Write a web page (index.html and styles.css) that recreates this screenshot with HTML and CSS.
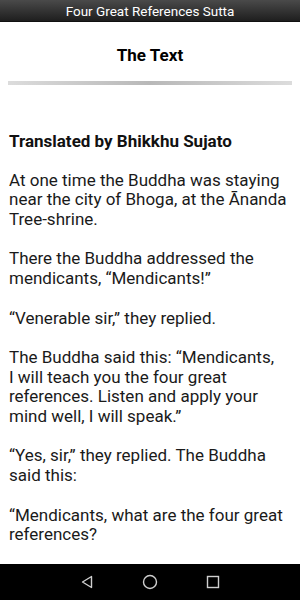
FILE: index.html
```html
<!DOCTYPE html>
<html>
<head>
<meta charset="utf-8">
<link rel="stylesheet" href="styles.css">
</head>
<body>
<div class="screen">
  <header class="appbar">Four Great References Sutta</header>
  <main class="content">
    <h1 class="title">The Text</h1>
    <div class="divider"></div>
    <h2 class="byline">Translated by Bhikkhu Sujato</h2>
    <p>At one time the Buddha was staying near the city of Bhoga, at the Ānanda Tree-shrine.</p>
    <p>There the Buddha addressed the mendicants, “Mendicants!”</p>
    <p>“Venerable sir,” they replied.</p>
    <p>The Buddha said this: “Mendicants,<br>I will teach you the four great<br>references. Listen and apply your mind well, I will speak.”</p>
    <p>“Yes, sir,” they replied. The Buddha said this:</p>
    <p>“Mendicants, what are the four great references?</p>
  </main>
  <nav class="navbar">
    <svg class="nav-icon" width="14" height="14" viewBox="0 0 14 14"><path d="M11.5 1.5 L2.5 7 L11.5 12.5 Z" fill="none" stroke="#cfcfcf" stroke-width="1.4" stroke-linejoin="round"/></svg>
    <svg class="nav-icon" width="16" height="16" viewBox="0 0 16 16"><circle cx="8" cy="8" r="6.5" fill="none" stroke="#cfcfcf" stroke-width="1.4"/></svg>
    <svg class="nav-icon" width="14" height="14" viewBox="0 0 14 14"><rect x="1.5" y="1.5" width="11" height="11" fill="none" stroke="#cfcfcf" stroke-width="1.4"/></svg>
  </nav>
</div>
</body>
</html>
```
FILE: styles.css
```css
html, body {
  margin: 0;
  padding: 0;
  background: #fff;
}
.screen {
  width: 300px;
  height: 600px;
  display: flex;
  flex-direction: column;
  overflow: hidden;
  font-family: Roboto, "Liberation Sans", sans-serif;
  color: #1a1a1a;
}
.appbar {
  height: 21px;
  flex: none;
  background: linear-gradient(to bottom, #4a4a4a, #1e1e1e);
  color: #fff;
  font-size: 13.5px;
  line-height: 22px;
  text-align: center;
  border-bottom: 1px solid #111;
}
.content {
  flex: 1;
  overflow: hidden;
  padding: 0 9px;
}
.title {
  margin: 0;
  padding-top: 22px;
  font-size: 17px;
  line-height: 22px;
  font-weight: 700;
  text-align: center;
  color: #000;
}
.divider {
  height: 4px;
  margin: 15px -1px 0;
  background: linear-gradient(to right, #dcdcdc, #b8b8b8 50%, #dcdcdc);
}
.byline {
  margin: 46px 0 0;
  font-size: 17px;
  line-height: 20px;
  font-weight: 700;
  color: #111;
}
.content p {
  margin: 19.7px 0 0;
  font-size: 17px;
  line-height: 19.7px;
}
.navbar {
  height: 36px;
  flex: none;
  background: #000;
  display: flex;
  align-items: center;
  justify-content: center;
  gap: 48px;
}
```
